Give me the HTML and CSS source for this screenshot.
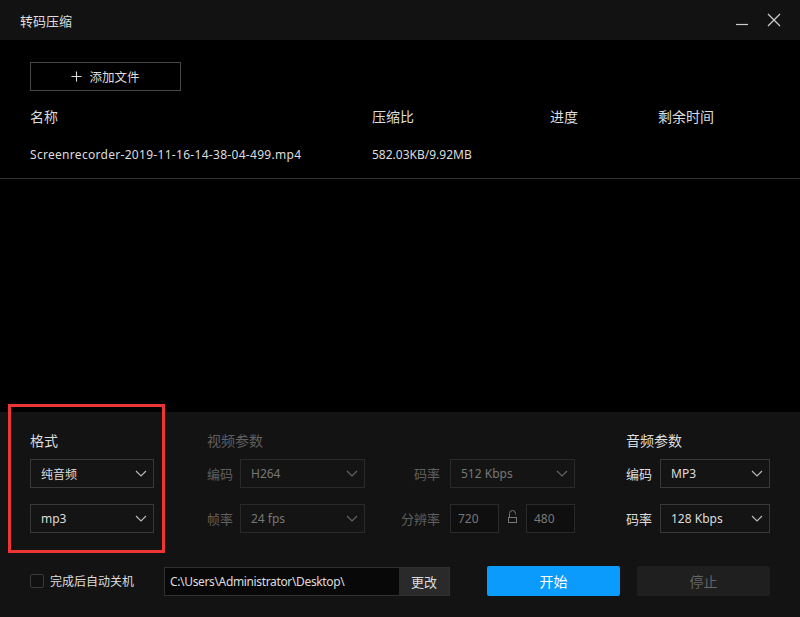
FILE: index.html
```html
<!DOCTYPE html>
<html lang="zh-CN">
<head>
<meta charset="utf-8">
<title>转码压缩</title>
<link rel="stylesheet" href="styles.css">
</head>
<body>
<div class="app">
  <header class="titlebar">
    <span class="title">转码压缩</span>
    <div class="win-ctrls">
      <svg class="win-min" width="14" height="14" viewBox="0 0 14 14"><line x1="1" y1="11.5" x2="13" y2="11.5" stroke="#ccc" stroke-width="1.2"/></svg>
      <svg class="win-close" width="14" height="14" viewBox="0 0 14 14"><path d="M1 1 L13 13 M13 1 L1 13" stroke="#ccc" stroke-width="1.3" fill="none"/></svg>
    </div>
  </header>

  <main class="list-area">
    <div class="list-top">
      <button class="add-btn"><svg class="plus" width="11" height="11" viewBox="0 0 11 11"><path d="M5.5 0.5 V10.5 M0.5 5.5 H10.5" stroke="#ddd" stroke-width="1.1" fill="none"/></svg>添加文件</button>
      <div class="row head">
        <span>名称</span><span>压缩比</span><span>进度</span><span>剩余时间</span>
      </div>
      <div class="row file">
        <span class="fname">Screenrecorder-2019-11-16-14-38-04-499.mp4</span><span>582.03KB/9.92MB</span><span></span><span></span>
      </div>
    </div>
  </main>

  <section class="panel">
    <div class="params">
      <div class="col col-format">
        <h3 class="heading">格式</h3>
        <div class="rows">
          <div class="select"><span>纯音频</span><svg class="chev" viewBox="0 0 12 7"><path d="M1 1 L6 6 L11 1" /></svg></div>
          <div class="select"><span>mp3</span><svg class="chev" viewBox="0 0 12 7"><path d="M1 1 L6 6 L11 1" /></svg></div>
        </div>
      </div>

      <div class="col col-video">
        <h3 class="heading dim">视频参数</h3>
        <div class="vgrid">
          <span class="lbl dim">编码</span>
          <div class="select disabled"><span>H264</span><svg class="chev" viewBox="0 0 12 7"><path d="M1 1 L6 6 L11 1" /></svg></div>
          <span class="lbl dim right">码率</span>
          <div class="select disabled"><span>512 Kbps</span><svg class="chev" viewBox="0 0 12 7"><path d="M1 1 L6 6 L11 1" /></svg></div>

          <span class="lbl dim">帧率</span>
          <div class="select disabled"><span>24 fps</span><svg class="chev" viewBox="0 0 12 7"><path d="M1 1 L6 6 L11 1" /></svg></div>
          <span class="lbl dim right">分辨率</span>
          <div class="res">
            <div class="num">720</div>
            <svg class="lock" width="11" height="13" viewBox="0 0 11 13"><path d="M2.5 7 V3.5 a3 3 0 0 1 6 0 V4.5" fill="none" stroke="#777" stroke-width="1"/><rect x="1.5" y="7.5" width="8" height="5" fill="none" stroke="#777" stroke-width="1"/></svg>
            <div class="num">480</div>
          </div>
        </div>
      </div>

      <div class="col col-audio">
        <h3 class="heading">音频参数</h3>
        <div class="agrid">
          <span class="lbl">编码</span>
          <div class="select"><span>MP3</span><svg class="chev" viewBox="0 0 12 7"><path d="M1 1 L6 6 L11 1" /></svg></div>
          <span class="lbl">码率</span>
          <div class="select"><span>128 Kbps</span><svg class="chev" viewBox="0 0 12 7"><path d="M1 1 L6 6 L11 1" /></svg></div>
        </div>
      </div>
    </div>

    <div class="bottom">
      <label class="check"><span class="box"></span>完成后自动关机</label>
      <div class="path"><span class="path-text">C:\Users\Administrator\Desktop\</span><button class="change">更改</button></div>
      <button class="start">开始</button>
      <button class="stop">停止</button>
    </div>

    <div class="highlight"></div>
  </section>
</div>
</body>
</html>
```
FILE: styles.css
```css
* { box-sizing: border-box; }
html, body { margin: 0; padding: 0; background: #000; }
body {
  font-family: "Noto Sans", "Noto Sans CJK SC", sans-serif;
  color: #ddd;
  font-size: 13px;
}
.app {
  width: 800px;
  height: 617px;
  display: flex;
  flex-direction: column;
  position: relative;
}
.titlebar {
  height: 40px;
  background: #121212;
  display: flex;
  align-items: center;
  justify-content: space-between;
  padding: 0 19px 0 20px;
}
.title { font-size: 13px; color: #ddd; }
.win-ctrls { display: flex; gap: 18px; align-items: center; }
.win-min, .win-close { display: block; }

.list-area {
  height: 372px;
  background: #000;
}
.list-top {
  padding: 22px 0 0 0;
  border-bottom: 1px solid #333;
  height: 139px;
}
.add-btn {
  margin-left: 30px;
  width: 151px;
  height: 29px;
  background: #000;
  border: 1px solid #474747;
  color: #ddd;
  font-family: inherit;
  font-size: 12.5px;
  display: flex;
  align-items: center;
  justify-content: center;
  padding: 0;
}
.plus { display: block; margin-right: 7px; }
.row {
  display: grid;
  grid-template-columns: 342px 178px 108px 1fr;
  padding-left: 30px;
  height: 26px;
  align-items: center;
}
.row.head { margin-top: 12px; font-size: 14px; }
.row.file { margin-top: 12px; font-size: 12px; }
.fname { letter-spacing: 0.3px; }

.panel {
  flex: 1;
  background: #131313;
  padding: 20px 30px 0;
  position: relative;
}
.params { display: flex; }
.heading {
  margin: 0 0 9px;
  height: 18px;
  line-height: 18px;
  font-size: 14px;
  font-weight: normal;
  color: #ddd;
}
.dim { color: #5f5f5f !important; }
.col-format { width: 124px; margin-right: 53px; }
.col-video { width: 368px; margin-right: 51px; }
.col-audio { width: 143px; }
.rows { display: flex; flex-direction: column; gap: 16px; }

.select {
  height: 29px;
  border: 1px solid #383838;
  background: #141414;
  display: flex;
  align-items: center;
  justify-content: space-between;
  padding: 0 6px 0 10px;
  font-size: 12px;
  color: #ddd;
}
.select.disabled { border-color: #2a2a2a; color: #777; background: #141414; }
.chev { width: 12px; height: 7px; fill: none; stroke: #bbb; stroke-width: 1.1; }
.select.disabled .chev { stroke: #666; }

.vgrid {
  display: grid;
  grid-template-columns: 33px 125px 85px 125px;
  row-gap: 16px;
  align-items: center;
}
.lbl { font-size: 13px; color: #ddd; }
.lbl.right { text-align: right; padding-right: 10px; }
.res { display: flex; align-items: center; justify-content: space-between; }
.num {
  width: 49px;
  height: 29px;
  border: 1px solid #2a2a2a;
  background: #0f0f0f;
  color: #777;
  font-size: 12px;
  display: flex;
  align-items: center;
  padding-left: 7px;
}
.lock { display: block; margin-top: -4px; }

.agrid {
  display: grid;
  grid-template-columns: 34px 110px;
  row-gap: 16px;
  align-items: center;
}

.bottom {
  margin-top: 33px;
  display: flex;
  align-items: center;
  height: 30px;
}
.check {
  width: 134px;
  display: flex;
  align-items: center;
  font-size: 12px;
  color: #ddd;
}
.box {
  width: 14px;
  height: 14px;
  border: 1px solid #3a3a3a;
  border-radius: 2px;
  margin-right: 6px;
  background: #111;
}
.path {
  width: 286px;
  height: 29px;
  display: flex;
  border: 1px solid #2f2f2f;
  background: #080808;
}
.path-text {
  flex: 1;
  font-size: 12px;
  letter-spacing: -0.35px;
  padding-left: 5px;
  display: flex;
  align-items: center;
  color: #ddd;
}
.change {
  width: 50px;
  border: 0;
  background: #2a2a2a;
  color: #ddd;
  font-family: inherit;
  font-size: 13px;
  padding: 0;
}
.start, .stop {
  width: 133px;
  height: 30px;
  border: 0;
  border-radius: 2px;
  font-family: inherit;
  font-size: 14px;
  padding: 0;
}
.start { margin-left: 37px; background: #0a9bfd; color: #fff; }
.stop { margin-left: 17px; background: #1f1f1f; color: #666; }

.highlight {
  position: absolute;
  left: 8px;
  top: -8px;
  width: 157px;
  height: 149px;
  border: 3px solid #ee3535;
  pointer-events: none;
}
```
